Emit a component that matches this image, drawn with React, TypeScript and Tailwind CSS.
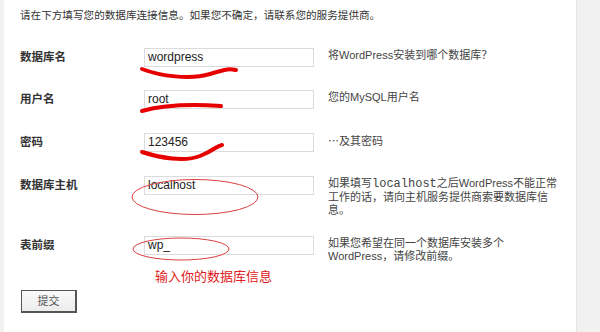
const sans = "font-['Liberation_Sans','Noto_Sans_CJK_SC',sans-serif]";

interface RowProps {
  label: string;
  value: string;
  height: string;
  children: React.ReactNode;
}

function Row({ label, value, height, children }: RowProps) {
  return (
    <div className={`flex items-start ${height}`}>
      <div className="w-[124px] pt-[2px] text-[11.5px] leading-[14px] font-bold text-[#333]">{label}</div>
      <div className="w-[170px] h-[19px] border border-[#dcdcdc] bg-white px-[3px] text-[12px] leading-[17px] text-[#222]">
        {value}
      </div>
      <div className="ml-[14px] pt-[1px] text-[11px] leading-[13px] text-[#444] whitespace-nowrap">{children}</div>
    </div>
  );
}

export default function App() {
  return (
    <div className={`w-[600px] h-[332px] bg-[#f1f1f1] ${sans} overflow-hidden`}>
      <div className="relative ml-[4px] w-[573px] h-[332px] bg-white border-r border-[#e4e4e4] pl-[16px] pt-[8px]">
        <p className="text-[10.6px] leading-[14px] text-[#333]">
          请在下方填写您的数据库连接信息。如果您不确定，请联系您的服务提供商。
        </p>

        <div className="mt-[26px] flex flex-col">
          <Row label="数据库名" value="wordpress" height="h-[42px]">
            将WordPress安装到哪个数据库？
          </Row>
          <Row label="用户名" value="root" height="h-[43px]">
            您的MySQL用户名
          </Row>
          <Row label="密码" value="123456" height="h-[43px]">
            <span className="font-['Noto_Sans_CJK_SC',sans-serif]">…</span>及其密码
          </Row>
          <Row label="数据库主机" value="localhost" height="h-[60px]">
            <div>
              如果填写<code className="font-['Liberation_Mono',monospace] text-[12px]">localhost</code>之后WordPress不能正常
            </div>
            <div>工作的话，请向主机服务提供商索要数据库信</div>
            <div>息。</div>
          </Row>
          <Row label="表前缀" value="wp_" height="h-[25px]">
            <div>如果您希望在同一个数据库安装多个</div>
            <div>WordPress，请修改前缀。</div>
          </Row>
        </div>

        <p className="ml-[135px] mt-[8px] text-[13px] leading-[16px] text-[#e02020]">输入你的数据库信息</p>

        <button className="mt-[5px] ml-[1px] w-[56px] h-[23px] border border-[#555] border-r-2 border-b-2 bg-gradient-to-b from-[#fafafa] to-[#ececec] text-[11px] text-[#555]">
          提交
        </button>

        <svg className="absolute left-[-4px] top-0 pointer-events-none" width="600" height="332" viewBox="0 0 600 332">
          <g fill="none" stroke="#e60000" strokeWidth="4" strokeLinecap="round">
            <path d="M142 69 C 160 76, 190 80, 210 74 S 230 69, 236 70" />
            <path d="M142 111 C 160 106, 190 104, 221 106" />
            <path d="M142 152 C 160 158, 185 162, 200 156 S 216 146, 222 145" />
          </g>
          <g fill="none" stroke="#d94040" strokeWidth="1">
            <ellipse cx="195" cy="197" rx="63" ry="17.5" />
            <ellipse cx="181" cy="249" rx="48" ry="11" />
          </g>
        </svg>
      </div>
    </div>
  );
}
